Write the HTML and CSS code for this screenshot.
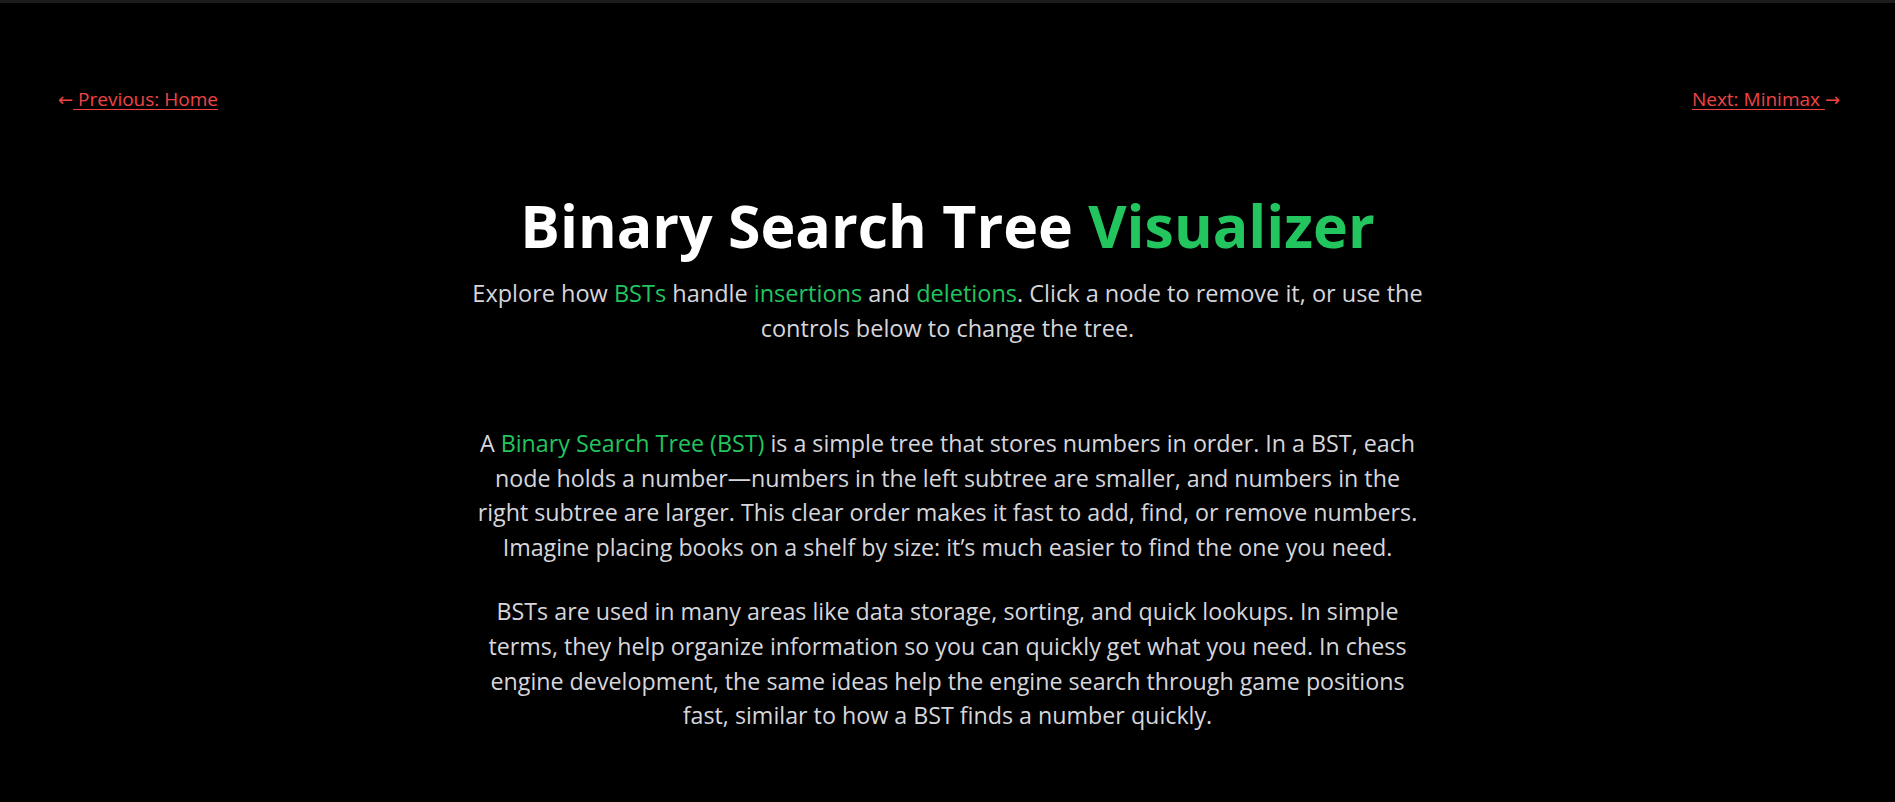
FILE: index.html
```html
<!DOCTYPE html>
<html lang="en">
<head>
<meta charset="utf-8">
<title>Binary Search Tree Visualizer</title>
<link rel="stylesheet" href="styles.css">
</head>
<body>
<div class="topbar"></div>
<nav class="pager">
  <a class="pager-link" href="#"><span class="arrow">←</span> Previous: Home</a>
  <a class="pager-link" href="#">Next: Minimax <span class="arrow">→</span></a>
</nav>
<main class="content">
  <header class="intro">
    <h1 class="title">Binary Search Tree <span class="accent">Visualizer</span></h1>
    <p class="subtitle">Explore how <span class="accent">BSTs</span> handle <span class="accent">insertions</span> and <span class="accent">deletions</span>. Click a node to remove it, or use the controls below to change the tree.</p>
  </header>
  <section class="about">
    <p>A <span class="accent">Binary Search Tree (BST)</span> is a simple tree that stores numbers in order. In a BST, each node holds a number—numbers in the left subtree are smaller, and numbers in the right subtree are larger. This clear order makes it fast to add, find, or remove numbers. Imagine placing books on a shelf by size: it’s much easier to find the one you need.</p>
    <p>BSTs are used in many areas like data storage, sorting, and quick lookups. In simple terms, they help organize information so you can quickly get what you need. In chess engine development, the same ideas help the engine search through game positions fast, similar to how a BST finds a number quickly.</p>
  </section>
</main>
</body>
</html>
```
FILE: styles.css
```css
html, body {
  margin: 0;
  padding: 0;
  background: #000;
}
body {
  font-family: "Open Sans", "Noto Sans", sans-serif;
  color: #d6d6dc;
  overflow: hidden;
}
.topbar {
  height: 3px;
  background: #1c1c1c;
}
.pager {
  display: flex;
  justify-content: space-between;
  padding: 83px 55px 0 58px;
  font-size: 19px;
  line-height: 26px;
}
.pager-link {
  color: #ef4444;
  text-decoration: underline;
  text-underline-offset: 3px;
}
.arrow {
  display: inline-block;
  text-decoration: none;
  font-family: "DejaVu Sans", sans-serif;
  font-size: 18px;
}
.content {
  max-width: 958px;
  margin: 0 auto;
  text-align: center;
}
.intro {
  margin-top: 76px;
}
.title {
  margin: 0;
  font-size: 59px;
  line-height: 72px;
  font-weight: 700;
  color: #fff;
}
.accent {
  color: #22c55e;
}
.subtitle {
  margin: 15px 0 0;
  font-size: 23.5px;
  line-height: 35px;
}
.about {
  margin-top: 80px;
}
.about p {
  margin: 0 0 30px;
  font-size: 23.25px;
  line-height: 34.6px;
}
```
